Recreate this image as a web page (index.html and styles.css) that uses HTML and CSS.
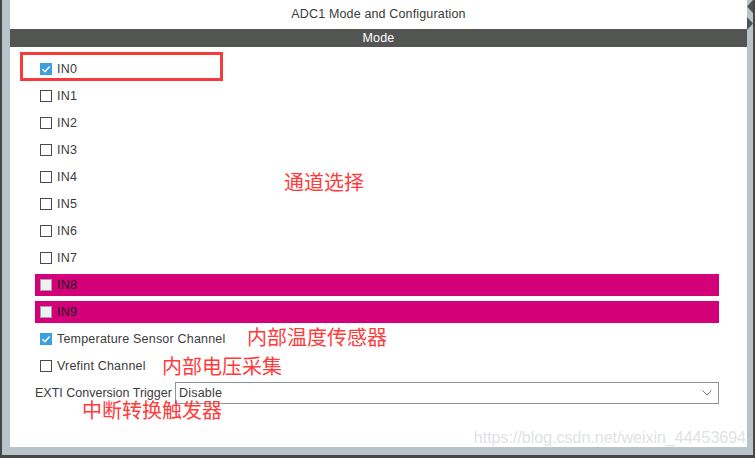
FILE: index.html
```html
<!DOCTYPE html>
<html lang="en">
<head>
    <meta charset="UTF-8">
    <title>ADC1 Mode and Configuration</title>
    <link rel="stylesheet" href="styles.css">
</head>
<body>

<div class="frame">
    <div class="panel">
        <div class="title">ADC1 Mode and Configuration</div>
        <div class="mode-bar">Mode</div>

        <div class="channels">
            <div class="row checked"><span class="box"><svg viewBox="0 0 12 12"><polyline points="2.5,6.2 5,8.7 9.6,3.4"/></svg></span>IN0</div>
            <div class="row"><span class="box"></span>IN1</div>
            <div class="row"><span class="box"></span>IN2</div>
            <div class="row"><span class="box"></span>IN3</div>
            <div class="row"><span class="box"></span>IN4</div>
            <div class="row"><span class="box"></span>IN5</div>
            <div class="row"><span class="box"></span>IN6</div>
            <div class="row"><span class="box"></span>IN7</div>
            <div class="row warn"><span class="box"></span>IN8</div>
            <div class="row warn"><span class="box"></span>IN9</div>
            <div class="row checked"><span class="box"><svg viewBox="0 0 12 12"><polyline points="2.5,6.2 5,8.7 9.6,3.4"/></svg></span>Temperature Sensor Channel</div>
            <div class="row"><span class="box"></span>Vrefint Channel</div>
            <div class="trigger">
                <span class="trigger-label">EXTI Conversion Trigger</span>
                <div class="select">
                    <span>Disable</span>
                    <svg class="chevron" viewBox="0 0 10 6"><polyline points="0.5,0.5 5,5 9.5,0.5"/></svg>
                </div>
            </div>
        </div>

        <!-- annotations drawn over the screenshot -->
        <div class="highlight"></div>
        <div class="note note-channels">通道选择</div>
        <div class="note note-temp">内部温度传感器</div>
        <div class="note note-vref">内部电压采集</div>
        <div class="note note-trigger">中断转换触发器</div>
        <div class="watermark">https://blog.csdn.net/weixin_44453694</div>
    </div>

    <div class="side">
        <svg viewBox="0 0 6 13"><polygon points="6,0 6,13 0,6.5"/></svg>
        <svg viewBox="0 0 6 13"><polygon points="0,0 0,13 6,6.5"/></svg>
    </div>
</div>

</body>
</html>
```

FILE: styles.css
```css
body {
    margin: 0;
    background-color: #474747;
    font-family: 'Liberation Sans', Arial, sans-serif;
    height: 458px;
    overflow: hidden;
}

.frame {
    display: flex;
    width: 751px;
    height: 455px;
    margin-left: 2px;
    padding: 0 0 8px 8px;
    box-sizing: border-box;
    background-color: #b9c4ca; /* grey window border */
}

.panel {
    width: 737px;
    background-color: white;
    position: relative;
}

.side {
    width: 6px;
    display: flex;
    flex-direction: column;
    gap: 4px;
}

.side svg {
    width: 6px;
    height: 13px;
    fill: #4f5354;
}

.title {
    height: 29px;
    line-height: 29px;
    text-align: center;
    font-size: 12.5px;
    letter-spacing: 0.15px;
    color: #3a3a3a;
}

.mode-bar {
    height: 18px;
    line-height: 18px;
    background-color: #535553;
    color: white;
    text-align: center;
    font-size: 12.5px;
    letter-spacing: 0.2px;
}

.channels {
    display: flex;
    flex-direction: column;
    gap: 5px;
    padding: 11px 28px 0 25px;
}

.row {
    height: 22px;
    display: flex;
    align-items: center;
    padding-left: 5px;
    font-size: 12.5px;
    letter-spacing: 0.2px;
    color: #3b3b3b;
}

.box {
    width: 12px;
    height: 12px;
    box-sizing: border-box;
    border: 1.5px solid #4b4b4b;
    background-color: white;
    margin-right: 5px;
    display: flex;
}

.box svg {
    width: 12px;
    height: 12px;
    margin: -1.5px;
    fill: none;
    stroke: white;
    stroke-width: 1.5;
}

.row.checked .box {
    background-color: #3ba1dc;
    border-color: #3ba1dc;
}

.row.warn {
    background-color: #d4007a; /* invalid pin highlight */
    color: #1c1c1c;
}

.row.warn .box {
    background-color: #eef0f1;
    border: 1px solid #9aa3a7;
}

.trigger {
    height: 22px;
    display: flex;
    align-items: center;
    font-size: 12.5px;
    color: #3b3b3b;
}

.trigger-label {
    width: 140px;
    white-space: nowrap;
}

.select {
    flex: 1;
    height: 22px;
    box-sizing: border-box;
    border: 1px solid #8c9599;
    display: flex;
    align-items: center;
    justify-content: space-between;
    padding: 0 6px 0 3px;
    letter-spacing: 0.2px;
}

.chevron {
    width: 10px;
    height: 6px;
    fill: none;
    stroke: #7a7a7a;
    stroke-width: 1;
}

.highlight {
    position: absolute;
    left: 10px;
    top: 52px;
    width: 203px;
    height: 29px;
    box-sizing: border-box;
    border: 3px solid #f73b3b;
}

.note {
    position: absolute;
    color: #ff3b3b;
    font-family: 'Noto Sans CJK SC', sans-serif;
    font-size: 20px;
    line-height: 20px;
    white-space: nowrap;
}

.note-channels { left: 274px; top: 172px; }
.note-temp { left: 237px; top: 327px; }
.note-vref { left: 152px; top: 356px; }
.note-trigger { left: 72px; top: 400px; }

.watermark {
    position: absolute;
    right: 1px;
    top: 429px;
    font-size: 16px;
    line-height: 18px;
    color: #e2e2e2;
}
```
